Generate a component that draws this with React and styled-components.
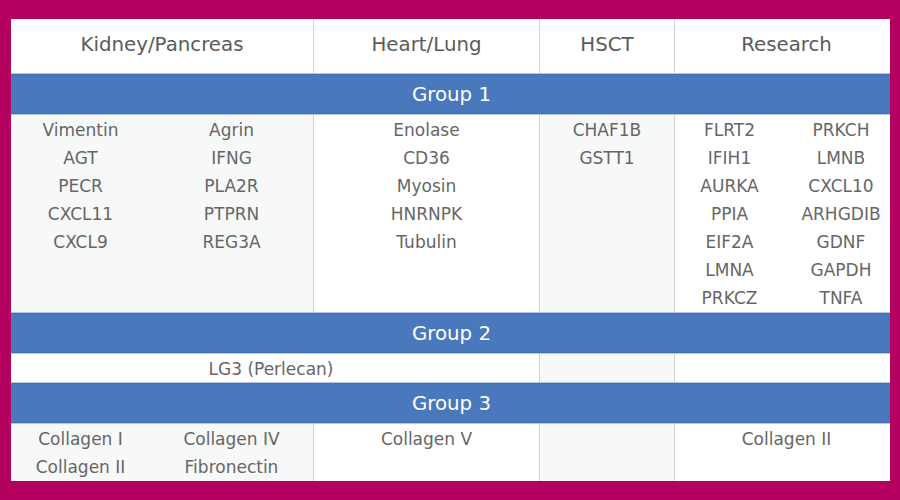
import React from 'react'
import styled, { createGlobalStyle } from 'styled-components'

const GlobalStyle = createGlobalStyle`
  html, body {
    margin: 0;
    padding: 0;
    background: #b4005f;
  }
  body {
    font-family: "DejaVu Sans", Verdana, sans-serif;
  }
`

const Frame = styled.div`
  width: 900px;
  height: 500px;
  box-sizing: border-box;
  padding: 19px 10px 19px 11px;
  background: #b4005f;
`

const Clip = styled.div`
  width: 879px;
  height: 462px;
  overflow: hidden;
  background: #fff;
`

const Grid = styled.div`
  display: grid;
  grid-template-columns: 139px 163px 226px 135px 110px 114px;
  grid-template-rows: 54px 42px 197px 42px 28px 42px 57px;
  background: #fff;
  height: 462px;
  width: 887px;
`

const HeadCell = styled.div`
  grid-column: ${(p) => p.$col};
  display: flex;
  align-items: center;
  justify-content: center;
  padding-bottom: 4px;
  font-size: 19.8px;
  color: #5b5b5b;
  border-left: ${(p) => (p.$first ? 'none' : '1px solid #d3d3d3')};
`

const GroupBar = styled.div`
  grid-column: 1 / 7;
  display: flex;
  align-items: center;
  justify-content: center;
  box-sizing: border-box;
  background: #4a78bc;
  border-top: 1px solid #b7c8e6;
  border-bottom: 1px solid #b7c8e6;
  box-shadow: inset 0 1px 0 #4170b8, inset 0 -1px 0 #4170b8;
  color: #fff;
  font-size: 19.8px;
  padding-top: 1px;
  padding-right: 6px;
`

const Cell = styled.div`
  grid-column: ${(p) => p.$col};
  display: flex;
  flex-direction: column;
  align-items: center;
  padding-top: 1px;
  padding-right: ${(p) => p.$shift || 0}px;
  background: ${(p) => (p.$shade ? '#f7f8f8' : '#fff')};
  border-left: ${(p) => (p.$line ? '1px solid #d3d3d3' : 'none')};
  font-size: 17px;
  line-height: 28px;
  color: #666;
  white-space: nowrap;
`

const rows = [
  {
    label: 'Group 1',
    cells: [
      { col: '1', shade: true, items: ['Vimentin', 'AGT', 'PECR', 'CXCL11', 'CXCL9'] },
      { col: '2', shade: true, items: ['Agrin', 'IFNG', 'PLA2R', 'PTPRN', 'REG3A'] },
      { col: '3', line: true, items: ['Enolase', 'CD36', 'Myosin', 'HNRNPK', 'Tubulin'] },
      { col: '4', line: true, shade: true, items: ['CHAF1B', 'GSTT1'] },
      { col: '5', line: true, items: ['FLRT2', 'IFIH1', 'AURKA', 'PPIA', 'EIF2A', 'LMNA', 'PRKCZ'] },
      { col: '6', items: ['PRKCH', 'LMNB', 'CXCL10', 'ARHGDIB', 'GDNF', 'GAPDH', 'TNFA'] },
    ],
  },
  {
    label: 'Group 2',
    cells: [
      { col: '1 / 4', shift: 8, items: ['LG3 (Perlecan)'] },
      { col: '4', line: true, shade: true, items: [] },
      { col: '5 / 7', line: true, items: [] },
    ],
  },
  {
    label: 'Group 3',
    cells: [
      { col: '1', shade: true, items: ['Collagen I', 'Collagen II'] },
      { col: '2', shade: true, items: ['Collagen IV', 'Fibronectin'] },
      { col: '3', line: true, items: ['Collagen V'] },
      { col: '4', line: true, shade: true, items: [] },
      { col: '5 / 7', line: true, items: ['Collagen II'] },
    ],
  },
]

const heads = [
  { col: '1 / 3', text: 'Kidney/Pancreas' },
  { col: '3', text: 'Heart/Lung' },
  { col: '4', text: 'HSCT' },
  { col: '5 / 7', text: 'Research' },
]

function App() {
  return (
    <>
      <GlobalStyle />
      <Frame>
        <Clip>
          <Grid>
            {heads.map((h, i) => (
              <HeadCell key={h.text} $col={h.col} $first={i === 0}>
                {h.text}
              </HeadCell>
            ))}
            {rows.map((row) => (
              <React.Fragment key={row.label}>
                <GroupBar>{row.label}</GroupBar>
                {row.cells.map((c, i) => (
                  <Cell key={i} $col={c.col} $shade={c.shade} $line={c.line} $shift={c.shift}>
                    {c.items.map((item) => (
                      <span key={item}>{item}</span>
                    ))}
                  </Cell>
                ))}
              </React.Fragment>
            ))}
          </Grid>
        </Clip>
      </Frame>
    </>
  )
}

export default App
